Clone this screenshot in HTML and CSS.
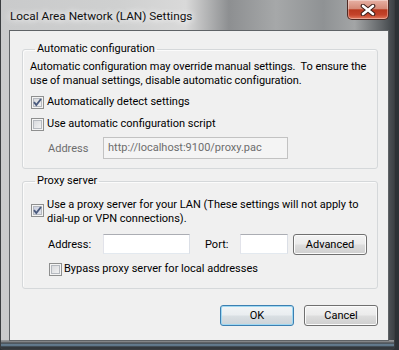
FILE: index.html
```html
<!DOCTYPE html>
<html lang="en">
<head>
    <meta charset="UTF-8">
    <meta name="viewport" content="width=device-width, initial-scale=1.0">
    <title>Local Area Network (LAN) Settings</title>
    <link rel="stylesheet" href="styles.css">
</head>
<body>

<div class="window">
    <div class="titlebar">
        <span class="title">Local Area Network (LAN) Settings</span>
        <div class="close">
            <svg width="16" height="12" viewBox="0 0 16 12">
                <path d="M3 2 L13 10 M13 2 L3 10" stroke="#3b1d18" stroke-width="4.6" stroke-linecap="round"/>
                <path d="M3 2 L13 10 M13 2 L3 10" stroke="#ffffff" stroke-width="2.6" stroke-linecap="round"/>
            </svg>
        </div>
    </div>

    <div class="client">
        <fieldset class="group group-auto">
            <legend>Automatic configuration</legend>
            <p class="desc">Automatic configuration may override manual settings.&nbsp; To ensure the<br>use of manual settings, disable automatic configuration.</p>
            <div class="check check-first">
                <span class="box checked">
                    <svg width="11" height="11" viewBox="0 0 11 11"><path d="M2 5.2 L4.3 8 L9 2" fill="none" stroke="#4b5b7e" stroke-width="1.9"/></svg>
                </span>
                Automatically detect settings
            </div>
            <div class="check">
                <span class="box"></span>
                Use automatic configuration script
            </div>
            <div class="field-row disabled">
                <span class="field-label">Address</span>
                <div class="input input-wide">http://localhost:9100/proxy.pac</div>
            </div>
        </fieldset>

        <fieldset class="group group-proxy">
            <legend>Proxy server</legend>
            <div class="check check-multi">
                <span class="box checked hot">
                    <svg width="11" height="11" viewBox="0 0 11 11"><path d="M2 5.2 L4.3 8 L9 2" fill="none" stroke="#4b5b7e" stroke-width="1.9"/></svg>
                </span>
                <span>Use a proxy server for your LAN (These settings will not apply to<br>dial-up or VPN connections).</span>
            </div>
            <div class="field-row">
                <span class="field-label">Address:</span>
                <div class="input input-address"></div>
                <span class="port-label">Port:</span>
                <div class="input input-port"></div>
                <div class="btn btn-advanced">Advanced</div>
            </div>
            <div class="check check-bypass">
                <span class="box"></span>
                Bypass proxy server for local addresses
            </div>
        </fieldset>

        <div class="actions">
            <div class="btn btn-default">OK</div>
            <div class="btn">Cancel</div>
        </div>
    </div>
</div>

</body>
</html>
```

FILE: styles.css
```css
body {
    margin: 0;
    background: #2d3236;
    font-family: Roboto, "Noto Sans", sans-serif;
    font-size: 11px;
    color: #000;
}

.window {
    width: 395px;
    height: 350px;
    box-sizing: border-box;
    padding: 0 5px 0 8px;
    border: 1px solid #3a3d40;
    border-top: none;
    border-radius: 0 0 4px 4px;
    background:
        linear-gradient(to bottom, transparent 340px, #9a9c9e 340px, #7b7e80 342px, #41464a 343px, #6f8ca3 345px, #33383c 347px),
        linear-gradient(to right, #c9cacb 0%, #cfd0d0 30%, #d9d9d9 47%, #8d8f91 58%, #a6a8a9 70%, #8f9294 82%, #a3a5a6 90%, #5f6366 97%, #3d4246 100%);
}

/* title bar */
.titlebar {
    height: 30px;
    display: flex;
    align-items: flex-start;
    margin-left: -7px;
    padding-left: 8px;
}
.title {
    font-size: 11.8px;
    line-height: 14px;
    margin-top: 9px;
    color: #111;
    text-shadow: 0 0 6px #fff, 0 0 10px #fff;
}
.close {
    margin-left: auto;
    width: 42px;
    height: 20px;
    box-sizing: border-box;
    border: 1px solid #4f2a24;
    border-top: none;
    border-radius: 0 0 5px 5px;
    background: linear-gradient(#e7b1a4 0%, #d58a78 45%, #b9391f 52%, #c4432a 78%, #e2795d 100%);
    box-shadow: inset 0 0 0 1px rgba(255, 255, 255, 0.35);
    display: flex;
    align-items: center;
    justify-content: center;
}

/* dialog body */
.client {
    height: 311px;
    box-sizing: border-box;
    border: 1px solid #5f6366;
    background: #f0f0f0;
    padding: 11px 10px 0 12px;
}

.group {
    margin: 0;
    padding: 0 8px 9px 7px;
    border: 1px solid #d5d8da;
    border-radius: 3px;
    box-shadow: inset 1px 1px 0 #fbfbfb;
}
.group legend {
    margin-left: 5px;
    padding: 0 2px;
    line-height: 14px;
}
.group-proxy {
    margin-top: 5px;
    padding-bottom: 12px;
}

.desc {
    margin: 4px 0 0 0;
    line-height: 14px;
    white-space: nowrap;
    letter-spacing: -0.05px;
}

.check {
    display: flex;
    align-items: center;
    gap: 3px;
    line-height: 14px;
    margin-top: 8px;
    padding-left: 1px;
    white-space: nowrap;
}
.check-first {
    margin-top: 7px;
}
.check-multi {
    align-items: flex-start;
    margin-top: 10px;
}
.check-multi .box {
    margin-top: 6px;
}
.check-bypass {
    margin-top: 7px;
    padding-left: 19px;
    gap: 2px;
}

.box {
    width: 13px;
    height: 13px;
    box-sizing: border-box;
    flex: none;
    border: 1px solid #8e8f8f;
    background: linear-gradient(135deg, #d2d4d8, #f7f7f7);
    box-shadow: inset 0 0 0 1px #f4f4f4, inset 0 0 0 2px #b5b9bf;
    display: flex;
    align-items: center;
    justify-content: center;
}
.box svg {
    display: block;
}
.box.hot {
    background: linear-gradient(135deg, #c6cbdc, #e4e7f0);
}

.field-row {
    display: flex;
    align-items: center;
    margin-top: 7px;
    padding-left: 18px;
}
.field-label {
    width: 55px;
}
.disabled {
    margin-top: 6px;
    color: #6d6d6d;
}

.input {
    box-sizing: border-box;
    height: 20px;
    border: 1px solid #abadb3;
    border-color: #abadb3 #dbdfe6 #e3e9ef #e2e3ea;
    background: #fff;
}
.input-wide {
    width: 185px;
    height: 22px;
    line-height: 20px;
    padding-left: 4px;
    background: #f4f4f4;
    border-color: #c2c2c2;
    color: #6d6d6d;
}
.input-address {
    width: 87px;
}
.port-label {
    margin-left: 15px;
    width: 35px;
}
.input-port {
    width: 48px;
}

.btn {
    width: 74px;
    height: 21px;
    box-sizing: border-box;
    border: 1px solid #707070;
    border-radius: 3px;
    background: linear-gradient(#f3f3f3 0%, #ebebeb 48%, #dddddd 52%, #cfcfcf 100%);
    box-shadow: inset 0 0 0 1px #fbfbfb;
    text-align: center;
    line-height: 19px;
}
.btn-advanced {
    margin-left: 5px;
    margin-top: 1px;
}
.btn-default {
    border-color: #3c7fb1;
    box-shadow: inset 0 0 0 1px #9fd8f2;
    background: linear-gradient(#f1f4f6 0%, #e9edf0 48%, #d9dfe3 52%, #ccd3d8 100%);
}

.actions {
    display: flex;
    justify-content: flex-end;
    gap: 10px;
    margin-top: 16px;
}
```
